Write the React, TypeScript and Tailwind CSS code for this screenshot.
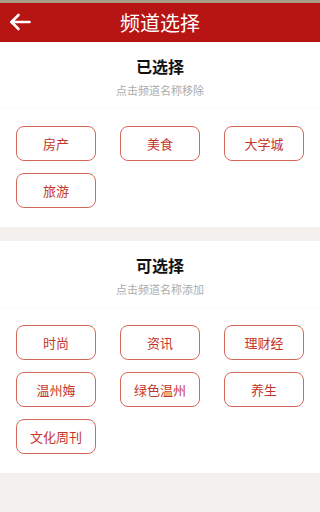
import React from 'react';

const selected = ['房产', '美食', '大学城', '旅游'];
const available = ['时尚', '资讯', '理财经', '温州娒', '绿色温州', '养生', '文化周刊'];

interface SectionProps {
  title: string;
  hint: string;
  items: string[];
}

const Section: React.FC<SectionProps> = ({ title, hint, items }) => (
  <section className="bg-white pb-[19px]">
    <div className="flex flex-col items-center pt-[16px] pb-[11px] shadow-[0_1px_0_#f9f9f9]">
      <h2 className="text-[16px] leading-[16px] font-bold text-[#111]">{title}</h2>
      <p className="mt-[10px] text-[11px] leading-[13px] text-[#ababab]">{hint}</p>
    </div>
    <div className="mt-[18px] grid grid-cols-3 gap-x-[24px] gap-y-[12px] px-[16px]">
      {items.map((item) => (
        <button
          key={item}
          type="button"
          className="flex h-[35px] items-center justify-center rounded-[8px] border-[1.5px] border-[#d6685a] text-[13px] text-[#c3352b]"
        >
          {item}
        </button>
      ))}
    </div>
  </section>
);

export default function App() {
  return (
    <div className="h-[512px] w-[320px] overflow-hidden bg-[#f3f0ed] font-['Noto_Sans_CJK_SC','Noto_Sans',sans-serif]">
      <div className="h-[3px] bg-[#a89c86]" />
      <header className="relative flex h-[39px] items-center justify-center bg-[#b71414]">
        <button type="button" className="absolute left-[8px] top-[8px] flex h-[22px] w-[24px] items-center justify-center" aria-label="返回">
          <svg width="22" height="18" viewBox="0 0 22 18" fill="none" stroke="white" strokeWidth="2.6" strokeLinecap="round" strokeLinejoin="round">
            <path d="M20.5 9H2.5" />
            <path d="M9.5 2L2.5 9l7 7" />
          </svg>
        </button>
        <h1 className="text-[20px] leading-none text-white">频道选择</h1>
      </header>
      <Section title="已选择" hint="点击频道名称移除" items={selected} />
      <div className="h-[14px]" />
      <Section title="可选择" hint="点击频道名称添加" items={available} />
    </div>
  );
}
